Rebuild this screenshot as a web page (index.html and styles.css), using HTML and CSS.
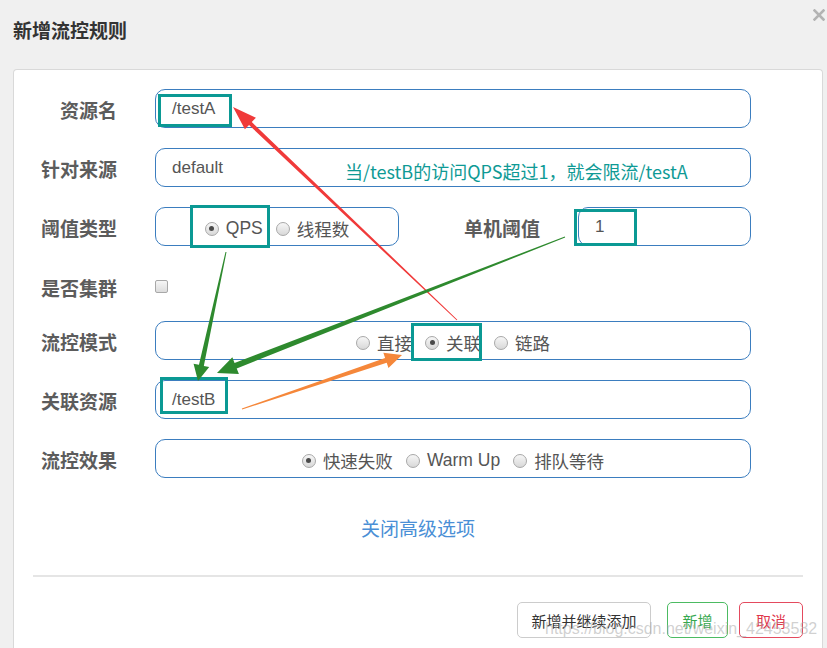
FILE: index.html
```html
<!DOCTYPE html>
<html lang="zh-CN">
<head>
<meta charset="utf-8">
<title>新增流控规则</title>
<link rel="stylesheet" href="styles.css">
</head>
<body>
<div class="page">
  <header class="modal-head">
    <h4 class="title">新增流控规则</h4>
    <span class="close" aria-label="关闭">
      <svg width="12" height="12" viewBox="0 0 12 12"><path d="M1.5 1.5 L10.5 10.5 M10.5 1.5 L1.5 10.5" stroke="#b3b3b3" stroke-width="2.6" stroke-linecap="square" fill="none"/></svg>
    </span>
  </header>

  <div class="card">
    <div class="form-row">
      <label class="lbl">资源名</label>
      <div class="input wide">/testA</div>
    </div>
    <div class="form-row">
      <label class="lbl">针对来源</label>
      <div class="input wide">default</div>
    </div>
    <div class="form-row">
      <label class="lbl">阈值类型</label>
      <div class="input radios narrow">
        <span class="radio-item"><span class="radio checked"></span>QPS</span>
        <span class="radio-item"><span class="radio"></span>线程数</span>
      </div>
      <label class="lbl lbl2">单机阈值</label>
      <div class="input small">1</div>
    </div>
    <div class="form-row check-row">
      <label class="lbl">是否集群</label>
      <span class="checkbox"></span>
    </div>
    <div class="form-row">
      <label class="lbl">流控模式</label>
      <div class="input radios wide">
        <span class="radio-item"><span class="radio"></span>直接</span>
        <span class="radio-item"><span class="radio checked"></span>关联</span>
        <span class="radio-item"><span class="radio"></span>链路</span>
      </div>
    </div>
    <div class="form-row">
      <label class="lbl">关联资源</label>
      <div class="input wide">/testB</div>
    </div>
    <div class="form-row">
      <label class="lbl">流控效果</label>
      <div class="input radios wide">
        <span class="radio-item"><span class="radio checked"></span>快速失败</span>
        <span class="radio-item"><span class="radio"></span>Warm Up</span>
        <span class="radio-item"><span class="radio"></span>排队等待</span>
      </div>
    </div>

    <div class="adv-link"><a>关闭高级选项</a></div>
    <div class="divider"></div>
    <div class="actions">
      <button class="btn btn-default">新增并继续添加</button>
      <button class="btn btn-ok">新增</button>
      <button class="btn btn-cancel">取消</button>
    </div>
  </div>

  <div class="note">当/testB的访问QPS超过1，就会限流/testA</div>
  <div class="watermark">https://blog.csdn.net/weixin_42453582</div>

  <svg class="annot" width="827" height="648" viewBox="0 0 827 648">
    <g fill="none" stroke="#0b9994" stroke-width="3">
      <rect x="159.5" y="95.5" width="71" height="30"/>
      <rect x="191.5" y="206.5" width="77" height="40"/>
      <rect x="575.5" y="210.5" width="60" height="34"/>
      <rect x="412.5" y="324.5" width="68" height="35"/>
      <rect x="161.5" y="378.5" width="65" height="34"/>
    </g>
    <polygon fill="#f03a3a" points="457.34,319.64 251.77,122.09 255.90,117.74 233,107 244.88,129.34 249.01,124.99 456.66,320.36"/>
    <polygon fill="#2e8a2e" points="225.51,251.89 198.95,364.83 193.57,363.66 198,381 209.21,367.06 203.83,365.89 226.49,252.11"/>
    <polygon fill="#2e8a2e" points="564.82,236.53 234.54,362.93 232.35,357.34 217,373 238.91,374.10 236.72,368.51 565.18,237.47"/>
    <polygon fill="#f5873a" points="242.16,409.47 386.70,362.80 388.46,368.01 402,355 383.34,352.85 385.10,358.06 241.84,408.53"/>
  </svg>
</div>
</body>
</html>
```
FILE: styles.css
```css
* { box-sizing: border-box; }

html, body {
  margin: 0;
  padding: 0;
  background: #f0f0f0;
}

body {
  font-family: "Liberation Sans", "Noto Sans CJK SC", sans-serif;
  color: #555;
}

.page {
  position: relative;
  width: 827px;
  height: 648px;
  overflow: hidden;
}

.modal-head {
  display: flex;
  justify-content: space-between;
  align-items: flex-start;
  padding: 9px 2px 0 13px;
  height: 41px;
}

.title {
  margin: 10px 0 0;
  font-family: "Noto Sans CJK SC", sans-serif;
  font-size: 19px;
  line-height: 22px;
  font-weight: 700;
  color: #333;
}

.close {
  display: block;
  width: 12px;
  height: 12px;
}
.close svg { display: block; }

.card {
  margin: 28px 0 0 13px;
  width: 810px;
  height: 620px;
  background: #fff;
  border: 1px solid #d9d9d9;
  border-bottom: none;
  border-radius: 4px 4px 0 0;
  padding-top: 19px;
}

.form-row {
  display: flex;
  align-items: center;
  height: 39px;
  margin-bottom: 20px;
}

.check-row {
  height: 41px;
  margin-bottom: 14px;
}

.lbl {
  width: 103px;
  margin-right: 38px;
  padding-top: 3px;
  text-align: right;
  font-family: "Noto Sans CJK SC", sans-serif;
  font-weight: 700;
  font-size: 19px;
  line-height: 24px;
  color: #5c5c5c;
}

.lbl2 { width: 141px; }

.input {
  height: 39px;
  border: 1px solid #3b7dbf;
  border-radius: 10px;
  padding: 0 16px;
  display: flex;
  align-items: center;
  font-size: 17px;
  color: #555;
  background: #fff;
}

.wide { width: 596px; }
.narrow { width: 244px; }
.small { width: 173px; }

.radios {
  justify-content: center;
  gap: 13px;
  font-size: 17.5px;
  padding-top: 4px;
}

.radio-item {
  display: inline-flex;
  align-items: center;
  gap: 7px;
  white-space: nowrap;
}

.radio {
  position: relative;
  width: 14px;
  height: 14px;
  border-radius: 50%;
  border: 1px solid #a8a8a8;
  background: linear-gradient(#f6f6f6, #d8d8d8);
  flex: none;
}

.radio.checked::after {
  content: "";
  position: absolute;
  left: 3.5px;
  top: 3.5px;
  width: 5px;
  height: 5px;
  border-radius: 50%;
  background: #4a4a4a;
}

.checkbox {
  width: 13px;
  height: 13px;
  border: 1px solid #a8a8a8;
  border-radius: 2px;
  background: linear-gradient(#f6f6f6, #dcdcdc);
}

.adv-link {
  margin-top: 40px;
  text-align: center;
  font-family: "Noto Sans CJK SC", sans-serif;
  font-size: 19px;
  line-height: 20px;
}
.adv-link a { color: #4a8fd6; }

.divider {
  margin: 37px 19px 0;
  height: 2px;
  background: #e5e5e5;
}

.actions {
  display: flex;
  justify-content: flex-end;
  gap: 11px;
  margin-top: 25px;
  padding-right: 19px;
}

.btn {
  height: 36px;
  padding: 0;
  background: #fff;
  border: 1px solid #ccc;
  border-radius: 5px;
  font-family: "Noto Sans CJK SC", sans-serif;
  font-size: 15px;
  color: #333;
}
.btn-default { width: 134px; margin-right: 5px; }
.btn-ok { width: 61px; border-color: #4cbb62; color: #35a84f; }
.btn-cancel { width: 64px; border-color: #e44a5e; color: #e0364c; }

.note {
  position: absolute;
  left: 345px;
  top: 160px;
  font-family: "Noto Sans CJK SC", sans-serif;
  font-size: 18px;
  line-height: 22px;
  color: #0e9a95;
  white-space: nowrap;
}

.watermark {
  position: absolute;
  left: 545px;
  top: 619px;
  font-family: "Liberation Sans", sans-serif;
  font-size: 16px;
  line-height: 20px;
  color: rgba(170, 170, 170, 0.55);
  white-space: nowrap;
  pointer-events: none;
}

.annot {
  position: absolute;
  left: 0;
  top: 0;
  pointer-events: none;
}
```
